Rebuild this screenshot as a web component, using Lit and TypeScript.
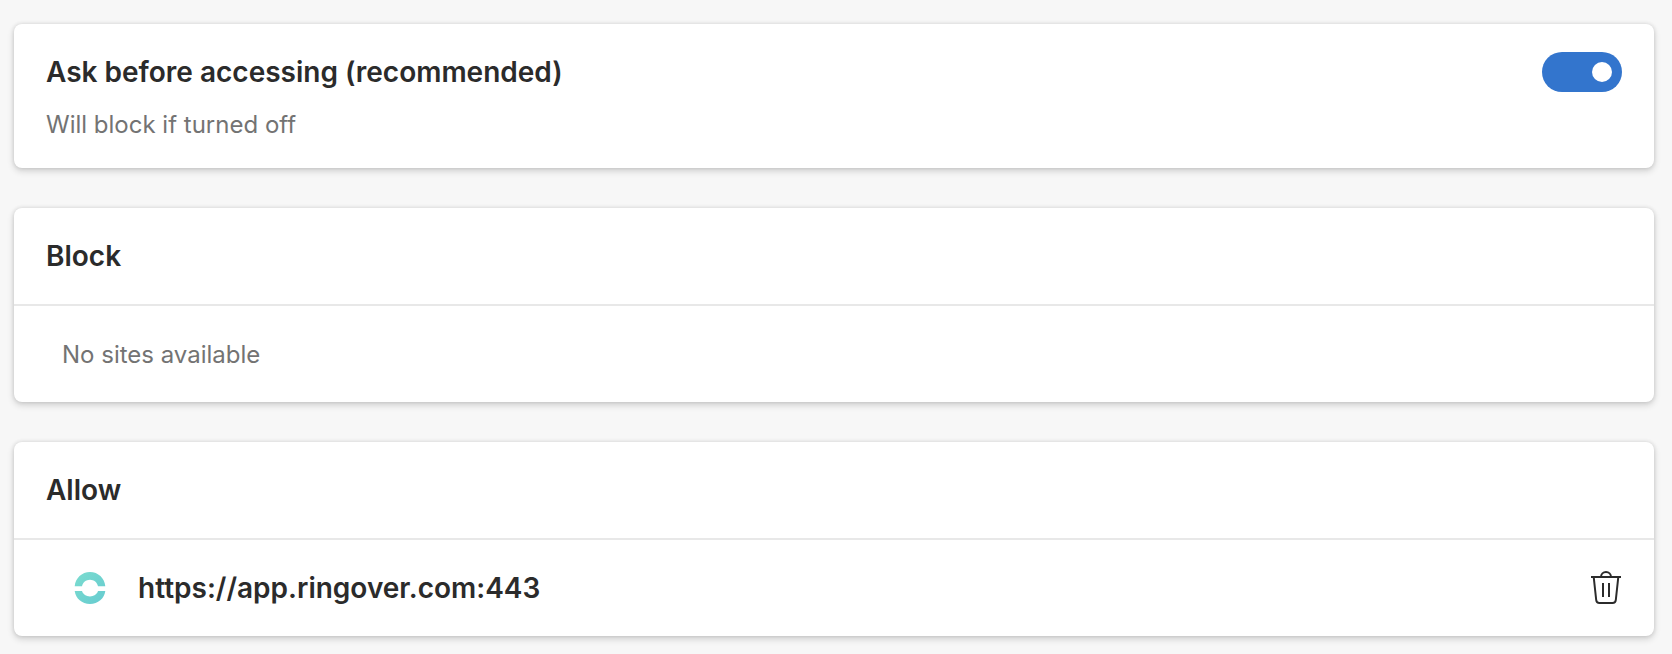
import { LitElement, html, css } from "lit";
import { customElement, property, state } from "lit/decorators.js";

@customElement("toggle-switch")
class ToggleSwitch extends LitElement {
  @property({ type: Boolean }) checked = false;
  @property() label = "";

  static styles = css`
    :host {
      display: block;
      flex: none;
    }
    .switch {
      appearance: none;
      display: flex;
      align-items: center;
      box-sizing: border-box;
      width: 80px;
      height: 40px;
      margin: 0;
      padding: 0 10px;
      border-radius: 20px;
      background: #767676;
      cursor: pointer;
    }
    .switch::before {
      content: "";
      width: 20px;
      height: 20px;
      border-radius: 50%;
      background: #fff;
    }
    .switch:checked {
      justify-content: flex-end;
      background: #3375cd;
    }
  `;

  private onChange(e: Event) {
    this.checked = (e.target as HTMLInputElement).checked;
  }

  render() {
    return html`<input
      class="switch"
      type="checkbox"
      role="switch"
      aria-label=${this.label}
      .checked=${this.checked}
      @change=${this.onChange}
    />`;
  }
}

@customElement("app-root")
class AppRoot extends LitElement {
  @state() private allowed = ["https://app.ringover.com:443"];

  static styles = css`
    :host {
      display: block;
      box-sizing: border-box;
      min-height: 100vh;
      padding: 24px 18px 18px 14px;
      background: #f7f7f7;
      color: #2b2b2b;
      font-family: Inter, "Liberation Sans", sans-serif;
    }
    .page {
      display: flex;
      flex-direction: column;
      gap: 40px;
    }
    .card {
      border-radius: 8px;
      background: #fff;
      box-shadow: 0 3px 7px rgba(0, 0, 0, 0.16), 0 0 4px rgba(0, 0, 0, 0.12);
    }
    .ask {
      display: flex;
      align-items: flex-start;
      justify-content: space-between;
      padding: 28px 32px 26px;
    }
    .copy {
      display: flex;
      flex-direction: column;
      gap: 16px;
    }
    .title {
      margin: 0;
      font-size: 28px;
      line-height: 40px;
      font-weight: 600;
    }
    .note {
      margin: 0;
      font-size: 24px;
      line-height: 34px;
      color: #737373;
    }
    .head {
      padding: 28px 32px;
      border-bottom: 2px solid #e8e8e8;
    }
    .empty {
      padding: 32px 48px 30px;
    }
    .sites {
      margin: 0;
      padding: 0;
      list-style: none;
    }
    .site {
      display: flex;
      align-items: center;
      gap: 32px;
      padding: 28px 32px 28px 60px;
    }
    .logo {
      flex: none;
      display: block;
    }
    .url {
      flex: 1;
    }
    .remove {
      display: flex;
      padding: 0;
      border: 0;
      background: none;
      color: inherit;
      cursor: pointer;
    }
  `;

  private remove(site: string) {
    this.allowed = this.allowed.filter((s) => s !== site);
  }

  private renderSite(site: string) {
    return html`<li class="site">
      <svg class="logo" width="32" height="32" viewBox="0 0 32 32" aria-hidden="true">
        <defs>
          <linearGradient id="ring" x1="0" y1="0" x2="1" y2="1">
            <stop offset="0" stop-color="#7bdccf" />
            <stop offset="1" stop-color="#66cbd0" />
          </linearGradient>
        </defs>
        <path
          fill="url(#ring)"
          d="M.7 14.2C1.4 6.2 7.8 0 16 0s14.6 6.2 15.3 14.2H24C23.3 10.5 20 7.7 16 7.7S8.700 10.5 8 14.2ZM.7 19H8c1 3.200 4.200 5.400 8 5.400s7-2.200 8-5.400h7.300C30.300 26.500 24 32 16 32S1.700 26.500.7 19Z"
        />
      </svg>
      <span class="title url">${site}</span>
      <button class="remove" aria-label="Remove ${site}" @click=${() => this.remove(site)}>
        <svg width="32" height="36" viewBox="0 0 32 36" fill="none" stroke="currentColor" stroke-width="2" aria-hidden="true">
          <path d="M1 7h30M11 7a5 5 0 0 1 10 0M3.700 7l2.500 23q.3 3 3.300 3h13q3 0 3.300-3l2.500-23M13 13v14M19 13v14" />
        </svg>
      </button>
    </li>`;
  }

  render() {
    return html`<main class="page">
      <section class="card ask">
        <div class="copy">
          <h2 class="title">Ask before accessing (recommended)</h2>
          <p class="note">Will block if turned off</p>
        </div>
        <toggle-switch checked label="Ask before accessing (recommended)"></toggle-switch>
      </section>
      <section class="card">
        <div class="head"><h2 class="title">Block</h2></div>
        <p class="note empty">No sites available</p>
      </section>
      <section class="card">
        <div class="head"><h2 class="title">Allow</h2></div>
        ${this.allowed.length
          ? html`<ul class="sites">${this.allowed.map((s) => this.renderSite(s))}</ul>`
          : html`<p class="note empty">No sites available</p>`}
      </section>
    </main>`;
  }
}
